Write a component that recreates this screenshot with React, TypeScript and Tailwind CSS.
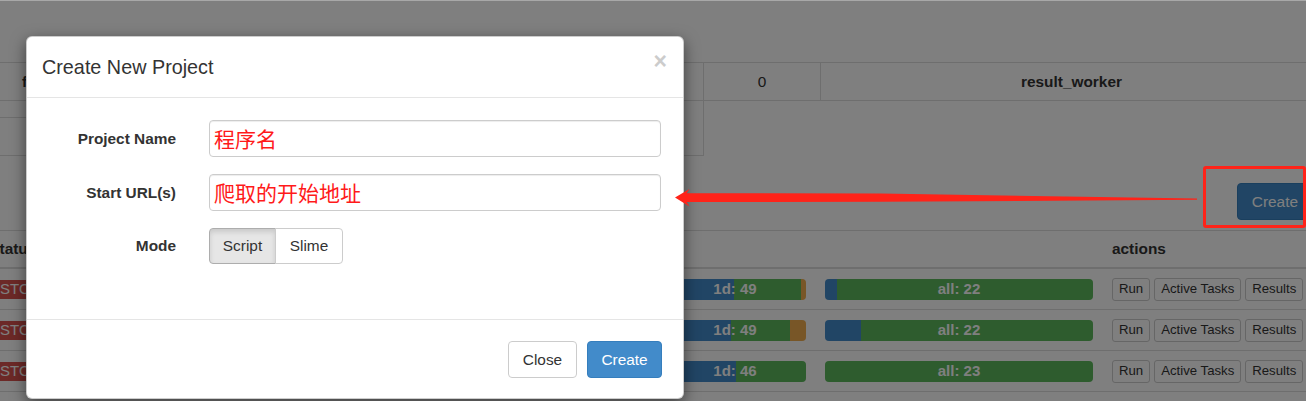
import React from 'react';

type Row = {
  day: number[];
  dayText: string;
  all: number[];
  allText: string;
};

const rows: Row[] = [
  { day: [70, 67, 5], dayText: '1d: 49', all: [12, 256], allText: 'all: 22' },
  { day: [67, 59, 16], dayText: '1d: 49', all: [36, 232], allText: 'all: 22' },
  { day: [72, 70, 0], dayText: '1d: 46', all: [0, 268], allText: 'all: 23' },
];

const segColors = ['bg-[#428bca]', 'bg-[#5cb85c]', 'bg-[#f0ad4e]'];

const Bar: React.FC<{ parts: number[]; text: string; width: string }> = ({ parts, text, width }) => (
  <div className={`relative flex h-[21px] overflow-hidden rounded-[4px] bg-[#f5f5f5] ${width}`}>
    {parts.map((w, i) => (
      <div key={i} className={segColors[i]} style={{ width: w }} />
    ))}
    <span className="absolute inset-0 flex items-center justify-center text-[15px] font-bold text-white">
      {text}
    </span>
  </div>
);

const SmallButton: React.FC<{ children: React.ReactNode }> = ({ children }) => (
  <button className="flex h-[23px] items-center rounded-[3px] border border-[#ccc] bg-white px-[6px] text-[13.2px] text-[#333]">
    {children}
  </button>
);

const Field: React.FC<{ label: string; children: React.ReactNode }> = ({ label, children }) => (
  <div className="flex items-center">
    <div className="w-[149px] text-right text-[15.4px] font-bold text-[#333]">{label}</div>
    <div className="ml-[33px]">{children}</div>
  </div>
);

const AnnotatedInput: React.FC<{ text: string }> = ({ text }) => (
  <div className="flex h-[37px] w-[452px] items-center rounded-[4px] border border-[#ccc] bg-white pl-[4px] shadow-[inset_0_1px_1px_rgba(0,0,0,0.075)]">
    <span className="text-[21px] leading-none text-[#ff1a1a] font-['Microsoft_YaHei','Noto_Sans_CJK_SC',sans-serif]">
      {text}
    </span>
  </div>
);

export default function App() {
  return (
    <div className="relative h-[401px] w-[1306px] overflow-hidden bg-white font-['Liberation_Sans',Arial,sans-serif] text-[15.4px] text-[#333]">
      {/* underlying page */}
      <div className="w-[1330px]">
        <div className="h-[62px]" />

        <div className="flex h-[39px] border-y border-[#ddd]">
          <div className="flex w-[703px] items-center pl-[22px] font-bold">f</div>
          <div className="flex w-[117px] items-center justify-center border-l border-[#ddd]">0</div>
          <div className="flex w-[502px] items-center justify-center border-l border-[#ddd] font-bold">
            result_worker
          </div>
        </div>
        <div className="flex h-[55px]">
          <div className="w-[704px] border-r border-b border-[#ddd]">
            <div className="h-[17px] w-[40px] border-b border-[#ddd]" />
          </div>
        </div>

        <div className="mt-[27px] flex h-[37px] justify-end pr-[17px]">
          <button className="h-[37px] rounded-[4px] border border-[#357ebd] bg-[#428bca] px-[14px] text-[15.4px] text-white">
            Create
          </button>
        </div>

        <div className="mt-[10px] flex h-[39px] items-center border-t border-b-2 border-[#ddd] font-bold">
          <div className="w-[664px]">
            <span className="ml-[-9px]">status</span>
          </div>
          <div className="w-[142px]" />
          <div className="w-[19px]" />
          <div className="w-[268px]" />
          <div className="w-[19px]" />
          <div>actions</div>
        </div>

        {rows.map((r, i) => (
          <div key={i} className="flex h-[41px] items-center border-b border-[#ddd]">
            <div className="w-[664px]">
              <span className="ml-[-6px] inline-flex h-[19px] items-center rounded-[3px] bg-[#d9534f] px-[6px] text-[15px] text-white">
                STOP
              </span>
            </div>
            <Bar parts={r.day} text={r.dayText} width="w-[142px]" />
            <div className="w-[19px]" />
            <Bar parts={r.all} text={r.allText} width="w-[268px]" />
            <div className="w-[19px]" />
            <div className="flex gap-[4px]">
              <SmallButton>Run</SmallButton>
              <SmallButton>Active Tasks</SmallButton>
              <SmallButton>Results</SmallButton>
            </div>
          </div>
        ))}
      </div>

      {/* backdrop */}
      <div className="absolute inset-0 bg-black/50" />
      <div className="absolute left-0 right-0 top-0 h-px bg-[#a8a8a8]" />

      {/* modal */}
      <div className="absolute left-[26px] top-[36px] w-[658px] overflow-hidden rounded-[6px] border border-black/20 bg-white shadow-[0_5px_15px_rgba(0,0,0,0.5)]">
        <div className="flex h-[61px] items-center justify-between border-b border-[#e5e5e5] pl-[15px] pr-[16px]">
          <h4 className="pt-px text-[19.8px] text-[#333]">Create New Project</h4>
          <span className="mb-[12px] text-[23px] font-bold leading-none text-[#ccc]">×</span>
        </div>

        <div className="flex h-[221px] flex-col gap-[17px] pt-[22px]">
          <Field label="Project Name">
            <AnnotatedInput text="程序名" />
          </Field>
          <Field label="Start URL(s)">
            <AnnotatedInput text="爬取的开始地址" />
          </Field>
          <Field label="Mode">
            <div className="flex h-[36px] text-[15.4px] text-[#333]">
              <div className="flex w-[67px] items-center justify-center rounded-l-[4px] border border-[#adadad] bg-[#e6e6e6] shadow-[inset_0_3px_5px_rgba(0,0,0,0.125)]">
                Script
              </div>
              <div className="-ml-px flex w-[68px] items-center justify-center rounded-r-[4px] border border-[#ccc] bg-white">
                Slime
              </div>
            </div>
          </Field>
        </div>

        <div className="flex justify-end gap-[10px] border-t border-[#e5e5e5] pb-[20px] pr-[21px] pt-[21px]">
          <button className="h-[37px] w-[69px] rounded-[4px] border border-[#ccc] bg-white text-[15.4px] text-[#333]">
            Close
          </button>
          <button className="h-[37px] w-[75px] rounded-[4px] border border-[#357ebd] bg-[#428bca] text-[15.4px] text-white">
            Create
          </button>
        </div>
      </div>

      {/* annotations */}
      <div className="absolute left-[1203px] top-[166px] h-[62px] w-[103px] rounded-[3px] border-[3px] border-[#ff2319]" />
      <svg className="pointer-events-none absolute left-0 top-0" width="1306" height="401">
        <polygon
          fill="#ff2319"
          points="675,197.5 689.5,189 686.5,193.2 880,193.4 1197,198.6 1197,199.8 880,201.8 686.5,202 689.5,206.5"
        />
      </svg>
    </div>
  );
}
